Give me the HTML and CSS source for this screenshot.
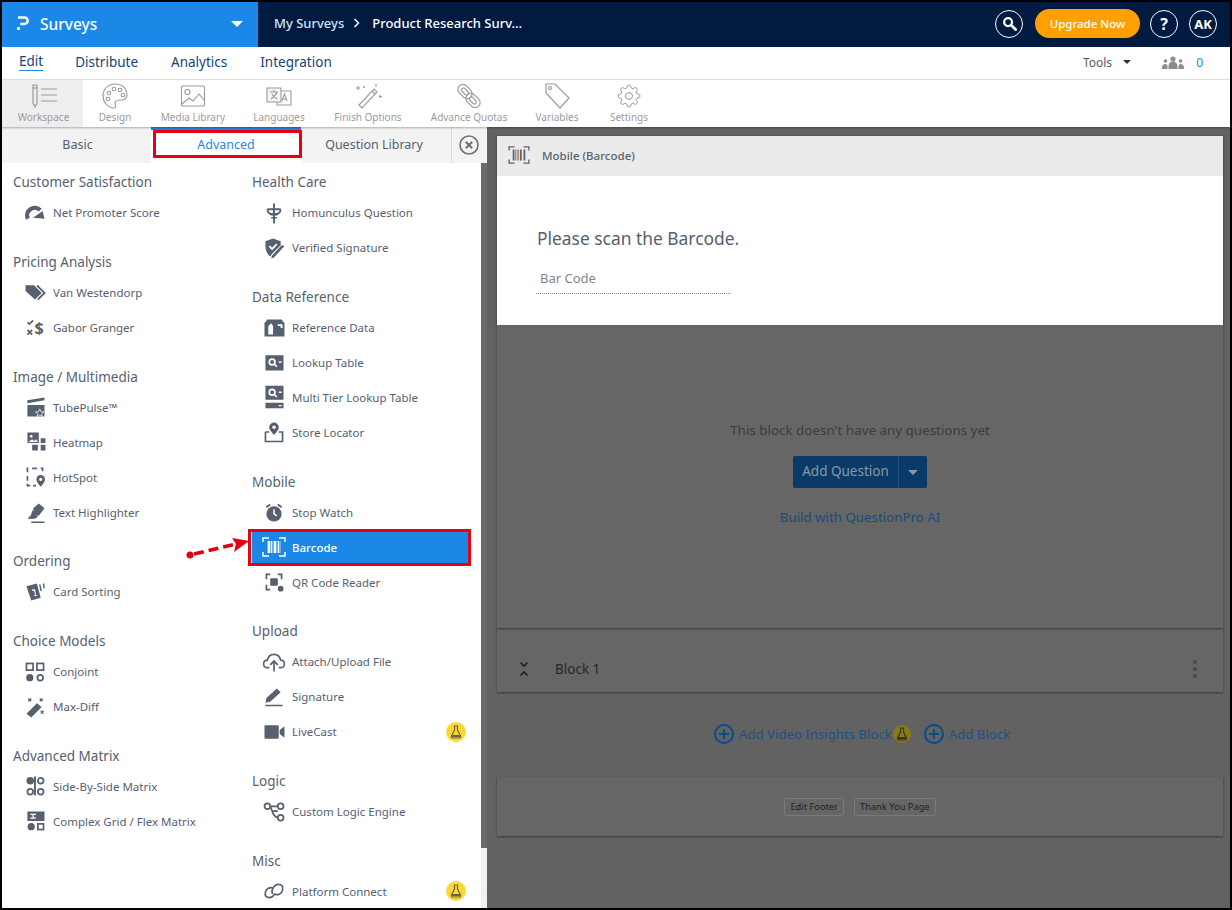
FILE: index.html
```html
<!DOCTYPE html>
<html lang="en">
<head>
<meta charset="utf-8">
<title>Surveys</title>
<link rel="stylesheet" href="styles.css">
</head>
<body>
<div class="app">
  <header class="topbar">
    <div class="brand">
      <svg class="brand-logo" viewBox="0 0 14 16"><path d="M1 1.500h7a3.500 3.500 0 0 1 0 7H3.500" fill="none" stroke="#fff" stroke-width="2.600"/><rect x="0" y="12" width="3" height="3" fill="#fff"/></svg>
      <span class="brand-name">Surveys</span>
      <span class="brand-caret"></span>
    </div>
    <nav class="crumbs">
      <span class="crumb-link">My Surveys</span>
      <svg class="crumb-sep" viewBox="0 0 8 10"><path d="M1.500 1l4 4-4 4" fill="none" stroke="#fff" stroke-width="1.500"/></svg>
      <span class="crumb-current">Product Research Surv...</span>
    </nav>
    <div class="top-actions">
      <span class="round-btn"><svg class="search-icon" viewBox="0 0 16 16"><circle cx="6.500" cy="6.500" r="4.200" fill="none" stroke="#fff" stroke-width="2.400"/><path d="M10 10l4.500 4.500" stroke="#fff" stroke-width="3" stroke-linecap="round"/></svg></span>
      <span class="upgrade">Upgrade Now</span>
      <span class="round-btn help">?</span>
      <span class="round-btn avatar">AK</span>
    </div>
  </header>

  <div class="subnav">
    <a class="subnav-link is-active">Edit</a>
    <a class="subnav-link">Distribute</a>
    <a class="subnav-link">Analytics</a>
    <a class="subnav-link">Integration</a>
    <div class="subnav-right">
      <span class="tools">Tools</span>
      <span class="tools-caret"></span>
      <svg class="people" viewBox="0 0 22 13"><g fill="#8d8d8d"><circle cx="11" cy="3" r="2.600"/><path d="M6.500 13v-3a4.500 4.500 0 0 1 9 0v3z"/><circle cx="3.500" cy="5" r="1.800"/><path d="M0 13v-2a3 3 0 0 1 5.500-1.500V13z"/><circle cx="18.500" cy="5" r="1.800"/><path d="M22 13v-2a3 3 0 0 0-5.500-1.500V13z"/></g></svg>
      <span class="people-count">0</span>
    </div>
  </div>

  <div class="toolbar">
    <div class="tool tool-workspace is-active">
      <svg class="tool-icon" viewBox="0 0 34 26"><g fill="none" stroke="#9a9a9a" stroke-width="1.200"><path d="M6 2h4v18l-2 4-2-4z"/><path d="M6 5h4"/></g><path d="M14 6h16M14 12h16M14 18h16" stroke="#9a9a9a" stroke-width="1.200"/></svg>
      <span class="tool-label">Workspace</span>
    </div>
    <div class="tool tool-design">
      <svg class="tool-icon" viewBox="0 0 34 26"><g fill="none" stroke="#9a9a9a" stroke-width="1.100"><path d="M17 1C9 1 5 7 5 13s5 12 11 12c3 0 1-3 1-5s3-3 6-3 6-1 6-5C29 5 24 1 17 1z"/><circle cx="11" cy="10" r="1.800"/><circle cx="16" cy="6" r="1.800"/><circle cx="22" cy="7" r="1.800"/><circle cx="25" cy="12" r="1.800"/><circle cx="10" cy="16" r="1.800"/></g></svg>
      <span class="tool-label">Design</span>
    </div>
    <div class="tool tool-media">
      <svg class="tool-icon" viewBox="0 0 34 26"><g fill="none" stroke="#9a9a9a" stroke-width="1.100"><rect x="5.500" y="3" width="23" height="20" rx="1"/><circle cx="11.500" cy="9" r="2.500"/><path d="M6 21l7-6 4 3 6-7 5 6"/></g></svg>
      <span class="tool-label">Media Library</span>
    </div>
    <div class="tool tool-lang">
      <svg class="tool-icon" viewBox="0 0 34 26"><g fill="none" stroke="#9a9a9a" stroke-width="1.100"><path d="M5 5h14v14H5z" fill="#f4f4f4"/><path d="M19 8h10v14H15v-3"/><path d="M8 9h8M12 7v2M15 9c-1 3-3 5-6 7M10 11c1 2 3 4 5 5"/><path d="M20 18l2.500-7 2.500 7M21 16h3"/></g></svg>
      <span class="tool-label">Languages</span>
    </div>
    <div class="tool tool-finish">
      <svg class="tool-icon" viewBox="0 0 34 26"><g fill="none" stroke="#9a9a9a" stroke-width="1.100"><path d="M8 22l15-16 3 3-15 16z"/><path d="M21 8l3 3M7 3v4M5 5h4M25 1v3M13 3v2M12 4h2M29 12v3M28 13.500h3"/></g></svg>
      <span class="tool-label">Finish Options</span>
    </div>
    <div class="tool tool-quotas">
      <svg class="tool-icon" viewBox="0 0 34 26"><g fill="none" stroke="#9a9a9a" stroke-width="1.200"><rect x="5" y="3.500" width="16" height="10" rx="5" transform="rotate(45 13 8.500)"/><rect x="13" y="12.500" width="16" height="10" rx="5" transform="rotate(45 21 17.500)"/><rect x="9" y="6.500" width="8" height="4" rx="2" transform="rotate(45 13 8.500)"/><rect x="17" y="15.500" width="8" height="4" rx="2" transform="rotate(45 21 17.500)"/></g></svg>
      <span class="tool-label">Advance Quotas</span>
    </div>
    <div class="tool tool-vars">
      <svg class="tool-icon" viewBox="0 0 34 26"><g fill="none" stroke="#9a9a9a" stroke-width="1.200"><path d="M6 1h9l14 14-9 10L6 10z"/><circle cx="10" cy="5" r="1.500"/></g></svg>
      <span class="tool-label">Variables</span>
    </div>
    <div class="tool tool-settings">
      <svg class="tool-icon" viewBox="-5 0 34 24"><g fill="none" stroke="#9a9a9a" stroke-width="1"><circle cx="12" cy="12" r="3.500"/><path d="M19.400 15a1.650 1.650 0 0 0 .33 1.820l.06.06a2 2 0 0 1 0 2.830 2 2 0 0 1-2.830 0l-.06-.06a1.650 1.650 0 0 0-1.820-.33 1.650 1.650 0 0 0-1 1.510V21a2 2 0 0 1-2 2 2 2 0 0 1-2-2v-.09A1.650 1.650 0 0 0 9 19.400a1.650 1.650 0 0 0-1.820.33l-.06.06a2 2 0 0 1-2.830 0 2 2 0 0 1 0-2.830l.06-.06a1.650 1.650 0 0 0 .33-1.820 1.650 1.650 0 0 0-1.510-1H3a2 2 0 0 1-2-2 2 2 0 0 1 2-2h.09A1.650 1.650 0 0 0 4.600 9a1.650 1.650 0 0 0-.33-1.820l-.06-.06a2 2 0 0 1 0-2.830 2 2 0 0 1 2.830 0l.06.06a1.650 1.650 0 0 0 1.820.33H9a1.650 1.650 0 0 0 1-1.510V3a2 2 0 0 1 2-2 2 2 0 0 1 2 2v.09a1.650 1.650 0 0 0 1 1.510 1.650 1.650 0 0 0 1.820-.33l.06-.06a2 2 0 0 1 2.830 0 2 2 0 0 1 0 2.830l-.06.06a1.650 1.650 0 0 0-.33 1.820V9a1.650 1.650 0 0 0 1.510 1H21a2 2 0 0 1 2 2 2 2 0 0 1-2 2h-.09a1.650 1.650 0 0 0-1.510 1z"/></g></svg>
      <span class="tool-label">Settings</span>
    </div>
  </div>

  <main class="workspace">
    <aside class="panel">
      <div class="tabs">
        <div class="tab tab-basic">Basic</div>
        <div class="tab tab-adv">Advanced</div>
        <div class="tab tab-lib">Question Library</div>
        <div class="tab-close">
          <svg class="close-icon" viewBox="0 0 20 20"><circle cx="10" cy="10" r="9" fill="none" stroke="#6f6f6f" stroke-width="1.600"/><path d="M6.800 6.800l6.400 6.400M13.200 6.800l-6.400 6.400" stroke="#6f6f6f" stroke-width="2"/></svg>
        </div>
      </div>
      <div class="panel-body">
        <div class="columns">
          <div class="col col-left">
            <section class="group">
              <h3 class="group-title">Customer Satisfaction</h3>
              <div class="item"><svg class="ico" viewBox="0 0 24 24"><path d="M4.500 18a8 8 0 0 1 13-9" fill="none" stroke="#56606e" stroke-width="4.500"/><path d="M10 17l10-7 2 8z"/></svg><span class="item-text">Net Promoter Score</span></div>
            </section>
            <section class="group">
              <h3 class="group-title">Pricing Analysis</h3>
              <div class="item"><svg class="ico" viewBox="0 0 24 24"><path d="M2 5h9l8 8-7 7-10-9z"/><path d="M14 5l8 8-7 7" fill="none" stroke="#56606e" stroke-width="2"/></svg><span class="item-text">Van Westendorp</span></div>
              <div class="item"><svg class="ico" viewBox="0 0 24 24"><path d="M4 7l2 2 4-4M4 15l5 5M9 15l-5 5" fill="none" stroke="#56606e" stroke-width="1.800"/><text class="ico-dollar" x="11.500" y="19">$</text></svg><span class="item-text">Gabor Granger</span></div>
            </section>
            <section class="group">
              <h3 class="group-title">Image / Multimedia</h3>
              <div class="item"><svg class="ico" viewBox="0 0 24 24"><path d="M4 10h18v12H4z"/><path d="M4 5l18-3v3L4 8z"/><path d="M17 14l1.300 3 3.200.2-2.500 2 .8 3-2.800-1.700-2.800 1.700.8-3-2.500-2 3.200-.2z" stroke="#fff" stroke-width=".8"/></svg><span class="item-text">TubePulse™</span></div>
              <div class="item"><svg class="ico" viewBox="0 0 24 24"><path d="M4 2h12v11H4z"/><circle cx="8" cy="6" r="1.500" fill="#fff"/><path d="M5 12l4-3 2 2 2-2 2 3z" fill="#fff"/><path d="M18 8h5v5h-5zM9 15h6v6H9zM18 15h5v6h-5z"/></svg><span class="item-text">Heatmap</span></div>
              <div class="item"><svg class="ico" viewBox="0 0 24 24"><path d="M5 3h-1v4M9 3h5M18 3h2v3M4 11v5M4 19v2h3M10 21h3" fill="none" stroke="#56606e" stroke-width="1.800"/><path d="M18 10a4.500 4.500 0 0 1 4.500 4.500c0 3-4.500 7.500-4.500 7.500s-4.500-4.500-4.500-7.500A4.500 4.500 0 0 1 18 10z"/><circle cx="18" cy="14.500" r="1.600" fill="#fff"/></svg><span class="item-text">HotSpot</span></div>
              <div class="item"><svg class="ico" viewBox="0 0 24 24"><path d="M10 8l6-5 6 5-6 8-5-1z"/><path d="M9.500 10l5.500 7-3 2H8l-1-2z"/><path d="M4 19l3-3 3 3zM8 22h14v1.500H8z"/></svg><span class="item-text">Text Highlighter</span></div>
            </section>
            <section class="group">
              <h3 class="group-title">Ordering</h3>
              <div class="item"><svg class="ico" viewBox="0 0 24 24"><path d="M3 6l11-3 4 15-10 3z"/><path d="M9 9v2l2-.5 1 5-2 .5 3 .5 2-.5-2-.5-1-6.500z" fill="#fff"/><path d="M17 4l1.500 7M21 3l.5 5" fill="none" stroke="#56606e" stroke-width="1.500"/></svg><span class="item-text">Card Sorting</span></div>
            </section>
            <section class="group">
              <h3 class="group-title">Choice Models</h3>
              <div class="item"><svg class="ico" viewBox="0 0 24 24"><g fill="none" stroke="#56606e" stroke-width="1.800"><rect x="3" y="3" width="7" height="7"/><rect x="14" y="3" width="7" height="7"/><circle cx="17.500" cy="18" r="3"/></g><circle cx="6.500" cy="18" r="3.800"/></svg><span class="item-text">Conjoint</span></div>
              <div class="item"><svg class="ico" viewBox="0 0 24 24"><path d="M3 19L14 8l5 4-11 11z"/><path d="M5 3l3 3M8 3L5 6M17 3l3 3M20 3l-3 3M18 16l3 3M21 16l-3 3" fill="none" stroke="#56606e" stroke-width="1.300"/></svg><span class="item-text">Max-Diff</span></div>
            </section>
            <section class="group">
              <h3 class="group-title">Advanced Matrix</h3>
              <div class="item"><svg class="ico" viewBox="0 0 24 24"><circle cx="7" cy="6.500" r="4"/><path d="M12 2v20" stroke="#56606e" stroke-width="2"/><g fill="none" stroke="#56606e" stroke-width="1.800"><circle cx="18" cy="6.500" r="3"/><circle cx="7" cy="18" r="3"/><circle cx="18" cy="18" r="3"/></g></svg><span class="item-text">Side-By-Side Matrix</span></div>
              <div class="item"><svg class="ico" viewBox="0 0 24 24"><path d="M4 2h18v10H4z"/><path d="M7 5h6M7 9h6M10 5v4" stroke="#fff" stroke-width="1.300"/><circle cx="8" cy="18" r="3.800"/><rect x="15" y="15" width="6" height="6" fill="none" stroke="#56606e" stroke-width="1.800"/></svg><span class="item-text">Complex Grid / Flex Matrix</span></div>
            </section>
          </div>
          <div class="col col-right">
            <section class="group">
              <h3 class="group-title">Health Care</h3>
              <div class="item"><svg class="ico" viewBox="0 0 24 24"><path d="M12 2v21M5 8h14M8 13h8" fill="none" stroke="#56606e" stroke-width="2"/><path d="M5 8a7 6 0 0 0 14 0M9 17h6" fill="none" stroke="#56606e" stroke-width="1.800"/></svg><span class="item-text">Homunculus Question</span></div>
              <div class="item"><svg class="ico" viewBox="0 0 24 24"><path d="M11 2l8 3v4l-9 9-2 3C5 19 3 15 3 10V5z"/><path d="M7 10l3 3 5-5" fill="none" stroke="#fff" stroke-width="1.800"/><path d="M20 9l3 1-11 12-3 1 1-3z"/></svg><span class="item-text">Verified Signature</span></div>
            </section>
            <section class="group">
              <h3 class="group-title">Data Reference</h3>
              <div class="item"><svg class="ico" viewBox="0 0 24 24"><path d="M5 4h15l3 4v14H2V8z"/><path d="M6 20v-9l3-3 2 3v9zM16 9h5v4h-2v-2h-3z" fill="#fff"/></svg><span class="item-text">Reference Data</span></div>
              <div class="item"><svg class="ico" viewBox="0 0 24 24"><path d="M3 5h19v16H3z"/><circle cx="10" cy="12" r="3" fill="none" stroke="#fff" stroke-width="1.800"/><path d="M12 14l3 3M17 12h3" stroke="#fff" stroke-width="1.800"/></svg><span class="item-text">Lookup Table</span></div>
              <div class="item"><svg class="ico" viewBox="0 0 24 24"><path d="M3 0h19v15H3z"/><circle cx="10" cy="7" r="3" fill="none" stroke="#fff" stroke-width="1.800"/><path d="M12 9l3 3M17 7h3" stroke="#fff" stroke-width="1.800"/><path d="M3 18h19v6H3z"/><path d="M17 21h3" stroke="#fff" stroke-width="1.400"/></svg><span class="item-text">Multi Tier Lookup Table</span></div>
              <div class="item"><svg class="ico" viewBox="0 0 24 24"><path d="M3 12v10h18V12h-4M7 12H3" fill="none" stroke="#56606e" stroke-width="1.800"/><path d="M12 2a5 5 0 0 1 5 5c0 3-5 8-5 8s-5-5-5-8a5 5 0 0 1 5-5z"/><circle cx="12" cy="7" r="1.800" fill="#fff"/></svg><span class="item-text">Store Locator</span></div>
            </section>
            <section class="group">
              <h3 class="group-title">Mobile</h3>
              <div class="item"><svg class="ico" viewBox="0 0 24 24"><circle cx="12" cy="14" r="8"/><path d="M12 9v5l3 2" fill="none" stroke="#fff" stroke-width="1.600"/><path d="M4 7l4-3M20 7l-4-3" stroke="#56606e" stroke-width="2"/></svg><span class="item-text">Stop Watch</span></div>
              <div class="item is-selected"><svg class="ico" viewBox="0 0 24 24"><g fill="none" stroke="#fff" stroke-width="1.500"><path d="M1 7V3h6M17 3h6v4M1 17v4h6M17 21h6v-4"/></g><path d="M5 6h14v12H5z" fill="#fff" opacity=".35"/><path d="M6 6h2v12H6zM9 6h1v12H9zM12 6h2v12h-2zM16 6h1v12h-1z" fill="#fff"/></svg><span class="item-text">Barcode</span></div>
              <div class="item"><svg class="ico" viewBox="0 0 24 24"><path d="M8 4H4v5M16 4h4v5M4 15v5h4M16 20h0" fill="none" stroke="#56606e" stroke-width="1.800"/><rect x="8" y="8" width="8" height="8" rx="1"/><circle cx="19" cy="19" r="3"/></svg><span class="item-text">QR Code Reader</span></div>
            </section>
            <section class="group">
              <h3 class="group-title">Upload</h3>
              <div class="item"><svg class="ico" viewBox="0 0 24 24"><path d="M7 18H5a4 4 0 0 1 0-8c1-4 4-6 7-6s6 2 7 6a4 4 0 0 1 0 8h-2" fill="none" stroke="#56606e" stroke-width="1.800"/><path d="M12 22V11M8 15l4-4 4 4" fill="none" stroke="#56606e" stroke-width="1.800"/></svg><span class="item-text">Attach/Upload File</span></div>
              <div class="item"><svg class="ico" viewBox="0 0 24 24"><path d="M3 18l1-5L15 3l4 4L8 17z"/><path d="M3 21h18" stroke="#56606e" stroke-width="1.500"/></svg><span class="item-text">Signature</span></div>
              <div class="item has-badge"><svg class="ico" viewBox="0 0 24 24"><rect x="2" y="5" width="15" height="14" rx="1"/><path d="M18 10l5-4v12l-5-4z"/></svg><span class="item-text">LiveCast</span><span class="beta"><svg class="flask" viewBox="0 0 12 14"><path d="M4.500 1h3v4l3 6a1.500 1.500 0 0 1-1.500 2H3a1.500 1.500 0 0 1-1.500-2l3-6z" fill="none" stroke="#6b6440" stroke-width="1.200"/><path d="M2.500 10h7l.5 2H2z" fill="#6b6440"/></svg></span></div>
            </section>
            <section class="group">
              <h3 class="group-title">Logic</h3>
              <div class="item"><svg class="ico" viewBox="0 0 24 24"><g fill="none" stroke="#56606e" stroke-width="1.800"><circle cx="5" cy="6" r="3"/><circle cx="19" cy="6" r="3"/><circle cx="19" cy="18" r="3"/><path d="M8 6h8M8 7c3 2 1 9 8 11M10 11h6"/></g></svg><span class="item-text">Custom Logic Engine</span></div>
            </section>
            <section class="group">
              <h3 class="group-title">Misc</h3>
              <div class="item has-badge"><svg class="ico" viewBox="0 0 24 24"><g fill="none" stroke="#56606e" stroke-width="1.800"><path d="M11 9a6 6 0 0 0-8 4c-1 4 1 6 4 6s4-1 6-4"/><path d="M12 15a6 6 0 0 0 9-4c1-4-1-6-4-6s-5 2-6 4-2 5 0 6"/></g></svg><span class="item-text">Platform Connect</span><span class="beta"><svg class="flask" viewBox="0 0 12 14"><path d="M4.500 1h3v4l3 6a1.500 1.500 0 0 1-1.500 2H3a1.500 1.500 0 0 1-1.500-2l3-6z" fill="none" stroke="#6b6440" stroke-width="1.200"/><path d="M2.500 10h7l.5 2H2z" fill="#6b6440"/></svg></span></div>
            </section>
          </div>
        </div>
        <div class="scrolltrack"><div class="scrollthumb"></div></div>
      </div>
    </aside>

    <section class="canvas">
      <article class="qcard">
        <div class="qcard-head">
          <svg class="qcard-icon" viewBox="0 0 24 20"><path d="M1 5V1h6M17 1h6v4M1 15v4h6M17 19h6v-4" fill="none" stroke="#5c6470" stroke-width="1.500"/><path d="M5 4h2v12H5zM8 4h1v12H8zM13 4h2v12h-2zM17 4h2v12h-2z" fill="#5c6470"/><path d="M10 4h2v12h-2z" fill="#c58f4f"/></svg>
          <span class="qcard-title">Mobile (Barcode)</span>
        </div>
        <div class="qcard-body">
          <p class="qcard-question">Please scan the Barcode.</p>
          <div class="qcard-input">Bar Code</div>
        </div>
      </article>
      <div class="empty-block">
        <p class="empty-text">This block doesn't have any questions yet</p>
        <div class="split-btn"><span class="split-main">Add Question</span><span class="split-caret"><span class="split-arrow"></span></span></div>
        <a class="ai-link">Build with QuestionPro AI</a>
      </div>
      <div class="block-bar">
        <svg class="collapse" viewBox="0 0 10 16"><path d="M1.500 1.500L5 5l3.500-3.500M1.500 14.500L5 11l3.500 3.500" fill="none" stroke="#222" stroke-width="1.600"/></svg>
        <span class="block-name">Block 1</span>
        <span class="kebab"><i></i><i></i><i></i></span>
      </div>
      <div class="add-row">
        <svg class="plus" viewBox="0 0 20 20"><circle cx="10" cy="10" r="9" fill="none" stroke="#0a4a8c" stroke-width="2"/><path d="M10 5v10M5 10h10" stroke="#0a4a8c" stroke-width="2"/></svg>
        <span class="add-text">Add Video Insights Block</span>
        <span class="beta beta-dim"><svg class="flask" viewBox="0 0 12 14"><path d="M4.500 1h3v4l3 6a1.500 1.500 0 0 1-1.500 2H3a1.500 1.500 0 0 1-1.500-2l3-6z" fill="none" stroke="#333" stroke-width="1.200"/><path d="M2.500 10h7l.5 2H2z" fill="#333"/></svg></span>
        <svg class="plus plus-second" viewBox="0 0 20 20"><circle cx="10" cy="10" r="9" fill="none" stroke="#0a4a8c" stroke-width="2"/><path d="M10 5v10M5 10h10" stroke="#0a4a8c" stroke-width="2"/></svg>
        <span class="add-text">Add Block</span>
      </div>
      <div class="footer-card">
        <span class="footer-btn">Edit Footer</span>
        <span class="footer-btn">Thank You Page</span>
      </div>
    </section>
  </main>

  <div class="mark mark-tab"></div>
  <div class="mark mark-item"></div>
  <svg class="mark-arrow" viewBox="0 0 64 22"><circle cx="4" cy="17" r="3.500" fill="#e00012"/><path d="M8 16l42-10" fill="none" stroke="#e00012" stroke-width="3.500" stroke-dasharray="10 5"/><path d="M63 3L46 0l4 6-2 8z" fill="#e00012"/></svg>
</div>
</body>
</html>
```
FILE: styles.css
```css
* { box-sizing: border-box; }
html, body { margin: 0; padding: 0; height: 910px; overflow: hidden; background: #000; }
body { font-family: "Noto Sans", "Open Sans", sans-serif; color: #56606e; }

.app { position: relative; width: 1232px; height: 910px; border: 2px solid #000; display: flex; flex-direction: column; background: #fff; overflow: hidden; }

/* top bar */
.topbar { height: 45px; flex: none; display: flex; align-items: center; background: #001a40; color: #fff; }
.brand { width: 256px; height: 100%; display: flex; align-items: center; background: #1b87e6; padding: 0 0 2px 15px; }
.brand-logo { width: 13px; height: 15px; }
.brand-name { margin-left: 10px; font-size: 15.500px; font-weight: 500; color: #fff; }
.brand-caret { margin-left: auto; margin-right: 15px; width: 0; height: 0; border-left: 6px solid transparent; border-right: 6px solid transparent; border-top: 6px solid #fff; }
.crumbs { display: flex; align-items: center; padding: 0 0 4px 16px; font-size: 13px; font-weight: 500; }
.crumb-link { color: #cfe6fb; }
.crumb-sep { width: 8px; height: 10px; margin: 0 11px 0 9px; }
.crumb-current { color: #fff; }
.top-actions { margin-left: auto; display: flex; align-items: center; padding: 0 13px 2px 0; }
.round-btn { width: 28px; height: 28px; border: 1px solid #fff; border-radius: 50%; display: flex; align-items: center; justify-content: center; color: #fff; font-weight: 700; font-size: 13px; }
.search-icon { width: 15px; height: 15px; }
.upgrade { width: 105px; height: 29px; margin: 0 10px 0 12px; background: #ffa000; border-radius: 15px; display: flex; align-items: center; justify-content: center; color: #fff; font-size: 11.500px; font-weight: 500; }
.help { font-size: 16px; }
.avatar { margin-left: 11px; }

/* sub navigation */
.subnav { height: 33px; flex: none; display: flex; align-items: center; padding: 0 0 2px 17px; border-bottom: 1px solid #e3e3e3; background: #fff; }
.subnav-link { font-size: 13.500px; color: #173f77; margin-right: 33px; line-height: 18px; }
.subnav-link.is-active { border-bottom: 1.500px solid #1b87e6; line-height: 17px; margin-right: 32px; }
.subnav-right { margin-left: auto; display: flex; align-items: center; padding-right: 27px; }
.tools { font-size: 12px; color: #5a5a5a; }
.tools-caret { margin-left: 11px; width: 0; height: 0; border-left: 4px solid transparent; border-right: 4px solid transparent; border-top: 4px solid #333; }
.people { width: 22px; height: 13px; margin-left: 31px; }
.people-count { margin-left: 12px; font-size: 12px; color: #1b87e6; }

/* toolbar */
.toolbar { height: 47px; flex: none; display: flex; background: #fff; box-shadow: 0 1px 2px rgba(0,0,0,.3); position: relative; }
.tool { display: flex; flex-direction: column; align-items: center; justify-content: flex-end; padding-bottom: 3px; flex: none; }
.tool.is-active { background: #eeeeee; }
.tool-workspace { width: 81px; padding-left: 2px; }
.tool-design { width: 64px; }
.tool-media { width: 92px; }
.tool-lang { width: 80px; }
.tool-finish { width: 98px; }
.tool-quotas { width: 104px; }
.tool-vars { width: 72px; }
.tool-settings { width: 72px; }
.tool-icon { width: 34px; height: 26px; margin-bottom: 2px; }
.tool-label { font-size: 10px; line-height: 13px; color: #9b9b9b; white-space: nowrap; }

/* workspace */
.workspace { flex: 1; min-height: 0; display: flex; }
.panel { width: 485px; flex: none; display: flex; flex-direction: column; background: #fff; }
.tabs { height: 36px; flex: none; display: flex; background: #f3f3f3; }
.tab { display: flex; align-items: center; justify-content: center; font-size: 12.500px; color: #56606e; padding-bottom: 2px; }
.tab-basic { width: 149px; padding-left: 2px; }
.tab-adv { width: 150px; background: #fff; border-top: 3px solid #1b87e6; color: #1b87e6; padding-bottom: 4px; }
.tab-lib { width: 150px; padding-right: 4px; }
.tab-close { flex: 1; display: flex; align-items: center; justify-content: flex-start; padding-left: 7px; border-left: 1px solid #dcdcdc; }
.close-icon { width: 20px; height: 20px; }
.panel-body { flex: 1; min-height: 0; display: flex; }
.columns { flex: 1; display: flex; overflow: hidden; padding-top: 5px; padding-left: 11px; }
.col-left { width: 239px; flex: none; }
.col-right { width: 218px; flex: none; }
.group { margin-bottom: 17.750px; }
.group-title { margin: 0; height: 27px; line-height: 29px; font-size: 13.500px; font-weight: 400; color: #56606e; }
.item { height: 35px; display: flex; align-items: center; padding: 0 4px 0 10px; font-size: 11.500px; color: #56606e; }
.ico { width: 24px; height: 24px; flex: none; margin-right: 6px; fill: #56606e; transform: scale(.95); }
.ico-dollar { font-size: 17px; font-weight: 700; fill: #56606e; font-family: "Noto Sans", sans-serif; }
.item.is-selected { background: #1b87e6; color: #fff; font-weight: 500; }
.item.is-selected .ico { fill: #fff; transform: none; }
.beta { margin-left: auto; width: 20px; height: 20px; border-radius: 50%; background: #fdd835; display: flex; align-items: center; justify-content: center; }
.flask { width: 12px; height: 14px; }
.scrolltrack { width: 6px; flex: none; background: #f1f1f1; }
.scrollthumb { height: 685px; background: #6b6b6b; }

/* canvas */
.canvas { flex: 1; min-width: 0; background: #626262; padding: 9px 7px 0 10px; display: flex; flex-direction: column; }
.qcard { flex: none; height: 189px; background: #fff; box-shadow: 0 1px 3px rgba(0,0,0,.4); }
.qcard-head { height: 40px; background: #ebebeb; display: flex; align-items: center; padding: 0 0 2px 11px; }
.qcard-icon { width: 22px; height: 18px; margin-right: 12px; }
.qcard-title { font-size: 11.500px; font-weight: 500; color: #5a6370; }
.qcard-body { padding: 50px 0 0 40px; }
.qcard-question { margin: 0; font-size: 17.400px; line-height: 24px; color: #56606e; }
.qcard-input { width: 195px; margin: 19px 0 0 -1px; padding: 0 0 6px 4px; font-size: 13px; line-height: 18px; color: #7f8790; border-bottom: 1px dotted #8a8a8a; }
.empty-block { flex: none; height: 303px; position: relative; z-index: 1; background: #666; box-shadow: 0 1px 2px rgba(0,0,0,.45); display: flex; flex-direction: column; align-items: center; padding-top: 95px; }
.empty-text { margin: 0; font-size: 13.400px; line-height: 20px; color: #3c3c3c; }
.split-btn { display: flex; height: 32px; margin-top: 16px; border-radius: 2px; overflow: hidden; background: #0a3b68; }
.split-main { width: 105px; display: flex; align-items: center; justify-content: center; font-size: 13.500px; color: #8899a6; padding-bottom: 2px; }
.split-caret { width: 29px; display: flex; align-items: center; justify-content: center; border-left: 1px solid #1a5484; }
.split-arrow { width: 0; height: 0; border-left: 5px solid transparent; border-right: 5px solid transparent; border-top: 5px solid #8899a6; }
.ai-link { margin-top: 20px; font-size: 13.300px; line-height: 18px; color: #174a80; }
.block-bar { flex: none; height: 64px; display: flex; align-items: center; padding: 18px 26px 0 22px; background: #666; box-shadow: 0 1px 2px rgba(0,0,0,.45); }
.collapse { width: 10px; height: 16px; }
.block-name { margin-left: 26px; font-size: 13.500px; color: #262626; }
.kebab { margin-left: auto; display: flex; flex-direction: column; gap: 3px; }
.kebab i { display: block; width: 4px; height: 4px; border-radius: 50%; background: #4a4a4a; }
.add-row { flex: none; height: 84px; display: flex; align-items: center; padding-left: 217px; }
.plus { width: 20px; height: 20px; flex: none; }
.plus-second { margin-left: 13px; }
.add-text { margin-left: 5px; font-size: 13.200px; color: #23507f; }
.beta-dim { margin-left: 1px; width: 18px; height: 18px; background: #8a7a14; }
.footer-card { flex: none; height: 59px; background: #666; box-shadow: 0 1px 2px rgba(0,0,0,.45); display: flex; align-items: center; justify-content: center; gap: 10px; margin-top: 1px; }
.footer-btn { height: 18px; padding: 0 5px; display: flex; align-items: center; border: 1px solid #7a7a7a; border-radius: 2px; font-size: 9.300px; color: #222; }

/* annotation overlays */
.mark { position: absolute; border: 3px solid #e60012; }
.mark-tab { left: 151px; top: 128px; width: 149px; height: 28px; background: transparent; }
.mark-item { left: 246px; top: 527px; width: 223px; height: 37px; }
.mark-arrow { position: absolute; left: 184px; top: 536px; width: 64px; height: 22px; }
```
